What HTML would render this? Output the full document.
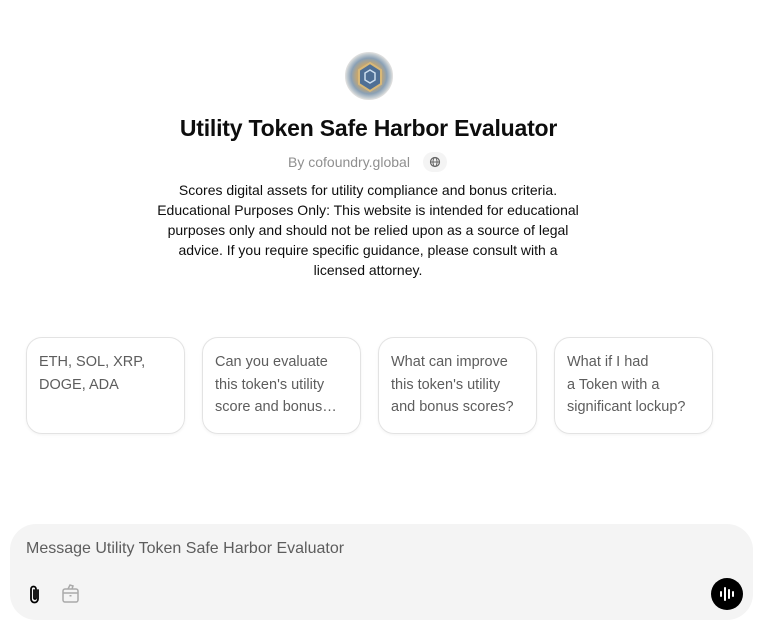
<!DOCTYPE html>
<html><head><meta charset="utf-8"><style>
*{box-sizing:border-box;margin:0;padding:0}
body{width:759px;height:629px;background:#fff;font-family:"Liberation Sans",sans-serif;color:#0d0d0d;position:relative;overflow:hidden}
.av{position:absolute;left:345px;top:52px;width:48px;height:48px;border-radius:50%;background:radial-gradient(circle,#6a8fb0 0%,#c9a66b 35%,#8aa0b5 55%,#e6e6e2 75%);border:1px solid #ddd}
h1{position:absolute;top:115px;left:0;width:737px;text-align:center;font-size:23px;font-weight:700;letter-spacing:-0.2px}
.by{position:absolute;top:154px;left:288px;font-size:14px;color:#8f8f8f}
.gl{position:absolute;top:152px;left:423px;width:24px;height:20px;border-radius:10px;background:#f4f4f4}
.desc{position:absolute;top:180px;left:118px;width:500px;text-align:center;font-size:14px;line-height:20px;color:#0d0d0d;white-space:nowrap}
.card{position:absolute;top:337px;width:159px;height:97px;border:1px solid #e3e3e3;border-radius:16px;padding:13px 12px;font-size:14.5px;line-height:22.5px;color:#5d5d5d;box-shadow:0 1px 3px rgba(0,0,0,.05)}
.comp{position:absolute;left:10px;top:524px;width:743px;height:96px;border-radius:26px;background:#f4f4f4}
.ph{position:absolute;left:16px;top:16px;font-size:16px;color:#5d5d5d}
.mic{position:absolute;right:10px;top:54px;width:32px;height:32px;border-radius:50%;background:#000}
</style></head><body>
<div class="av"><svg width="48" height="48" viewBox="0 0 48 48"><polygon points="24,10 35,17 35,31 24,38 13,31 13,17" fill="#4f6f95" stroke="#d8b878" stroke-width="2"/><polygon points="24,17 29,20 29,27 24,30 19,27 19,20" fill="none" stroke="#cde" stroke-width="1.5"/></svg></div>
<h1>Utility Token Safe Harbor Evaluator</h1>
<div class="by">By cofoundry.global</div>
<div class="gl"><svg width="24" height="20" viewBox="0 0 24 20"><circle cx="12" cy="10" r="4.5" fill="none" stroke="#666" stroke-width="1.2"/><ellipse cx="12" cy="10" rx="2" ry="4.5" fill="none" stroke="#666" stroke-width="1"/><line x1="7.5" y1="10" x2="16.5" y2="10" stroke="#666" stroke-width="1"/></svg></div>
<div class="desc">Scores digital assets for utility compliance and bonus criteria.<br>Educational Purposes Only: This website is intended for educational<br>purposes only and should not be relied upon as a source of legal<br>advice. If you require specific guidance, please consult with a<br>licensed attorney.</div>
<div class="card" style="left:26px">ETH, SOL, XRP,<br>DOGE, ADA</div>
<div class="card" style="left:202px">Can you evaluate this token's utility score and bonus…</div>
<div class="card" style="left:378px">What can improve this token's utility and bonus scores?</div>
<div class="card" style="left:554px">What if I had<br>a Token with a significant lockup?</div>
<div class="comp">
<div class="ph">Message Utility Token Safe Harbor Evaluator</div>
<svg style="position:absolute;left:16px;top:60px" width="18" height="22" viewBox="0 0 18 22"><path d="M12 6v9a3.5 3.5 0 0 1-7 0V5a2.5 2.5 0 0 1 5 0v9a1 1 0 0 1-2 0V6" fill="none" stroke="#000" stroke-width="1.8" stroke-linecap="round"/></svg>
<svg style="position:absolute;left:51px;top:58px" width="20" height="22" viewBox="0 0 20 22"><rect x="2" y="7" width="15" height="13" rx="2" fill="none" stroke="#aaa" stroke-width="1.5"/><line x1="2" y1="11" x2="17" y2="11" stroke="#aaa" stroke-width="1.5"/><path d="M7 7l2-4 3 1 -1 3" fill="none" stroke="#aaa" stroke-width="1.5"/><rect x="8.5" y="13" width="2" height="1.5" fill="#aaa"/></svg>
<div class="mic"><svg width="32" height="32" viewBox="0 0 32 32"><g stroke="#fff" stroke-width="2" stroke-linecap="round"><line x1="10" y1="14" x2="10" y2="18"/><line x1="14" y1="10" x2="14" y2="22"/><line x1="18" y1="12" x2="18" y2="20"/><line x1="22" y1="14" x2="22" y2="18"/></g></svg></div>
</div>
</body></html>
